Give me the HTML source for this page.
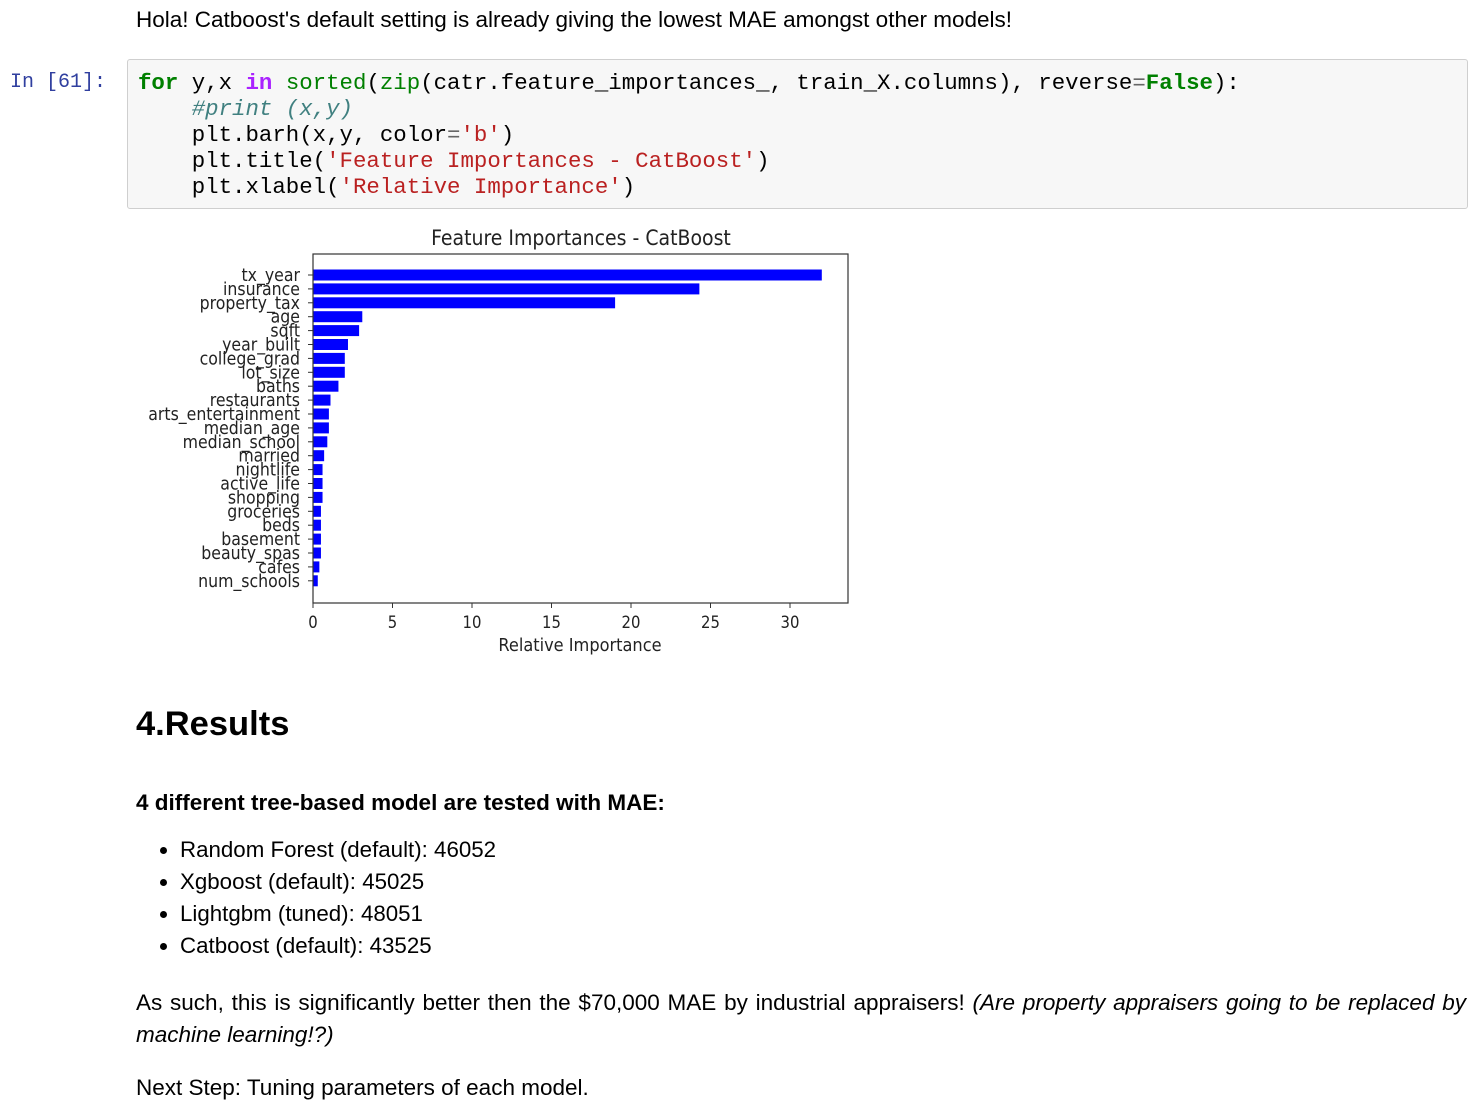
<!DOCTYPE html>
<html><head><meta charset="utf-8"><style>
body{margin:0;width:1480px;height:1120px;background:#fff;position:relative;font-family:"Liberation Sans",Arial,sans-serif;color:#000;overflow:hidden}
.a{position:absolute;white-space:nowrap}
.t{font-size:22.5px}
.code{position:absolute;left:127px;top:59px;width:1341px;height:150px;background:#f7f7f7;border:1px solid #cfcfcf;border-radius:3px;box-sizing:border-box}
pre{margin:0;position:absolute;left:10px;top:10px;font-family:"Liberation Mono",monospace;font-size:22.4px;line-height:26px;color:#000}
.k{color:#008000;font-weight:bold}.b{color:#008000}.p{color:#aa22ff;font-weight:bold}.s{color:#ba2121}.c{color:#408080;font-style:italic}.o{color:#666}
ul{position:absolute;left:136px;top:834px;margin:0;padding-left:44px;font-size:22.3px;line-height:32px}
</style></head><body>
<div class="a t" style="left:136px;top:7px">Hola! Catboost's default setting is already giving the lowest MAE amongst other models!</div>
<div class="a" style="left:10px;top:71px;font-family:'Liberation Mono',monospace;font-size:20px;color:#303f9f">In [61]:</div>
<div class="code"><pre><span class="k">for</span> y,x <span class="p">in</span> <span class="b">sorted</span>(<span class="b">zip</span>(catr.feature_importances_, train_X.columns), reverse<span class="o">=</span><span class="k">False</span>):
    <span class="c">#print (x,y)</span>
    plt.barh(x,y, color<span class="o">=</span><span class="s">'b'</span>)
    plt.title(<span class="s">'Feature Importances - CatBoost'</span>)
    plt.xlabel(<span class="s">'Relative Importance'</span>)</pre></div>
<svg class="a" style="left:0;top:0" width="900" height="670" font-family="DejaVu Sans Condensed, DejaVu Sans, sans-serif" font-size="17.5" fill="#222">
<text x="581" y="245" text-anchor="middle" font-size="21">Feature Importances - CatBoost</text>
<g fill="#0000ff" id="bars"></g>
<rect x="313" y="254" width="535" height="349" fill="none" stroke="#333" stroke-width="1.2"/>
<g id="lbl" text-anchor="end"></g>
<g id="xt" text-anchor="middle" font-size="16.5"></g>
<text x="580" y="651" text-anchor="middle" font-size="18">Relative Importance</text>
</svg>
<div class="a" style="left:136px;top:705px;font-size:34.5px;font-weight:bold">4.Results</div>
<div class="a t" style="left:136px;top:790px;font-weight:bold">4 different tree-based model are tested with MAE:</div>
<ul><li>Random Forest (default): 46052</li><li>Xgboost (default): 45025</li><li>Lightgbm (tuned): 48051</li><li>Catboost (default): 43525</li></ul>
<div class="a t" style="left:136px;top:987px;width:1330px;white-space:normal;line-height:32px;text-align:justify;text-align-last:left">As such, this is significantly better then the $70,000 MAE by industrial appraisers! <i>(Are property appraisers going to be replaced by machine learning!?)</i></div>
<div class="a t" style="left:136px;top:1075px">Next Step: Tuning parameters of each model.</div>
<script>
var n=["tx_year","insurance","property_tax","age","sqft","year_built","college_grad","lot_size","baths","restaurants","arts_entertainment","median_age","median_school","married","nightlife","active_life","shopping","groceries","beds","basement","beauty_spas","cafes","num_schools"];
var v=[32,24.3,19,3.1,2.9,2.2,2.0,2.0,1.6,1.1,1.0,1.0,0.9,0.7,0.6,0.6,0.6,0.5,0.5,0.5,0.5,0.4,0.3];
var NS="http://www.w3.org/2000/svg",b=document.getElementById("bars"),l=document.getElementById("lbl"),xt=document.getElementById("xt");
for(var i=0;i<n.length;i++){var cy=275+i*13.9;
var r=document.createElementNS(NS,"rect");r.setAttribute("x",313);r.setAttribute("y",cy-5.5);r.setAttribute("width",v[i]*15.9);r.setAttribute("height",11);b.appendChild(r);
var t=document.createElementNS(NS,"text");t.setAttribute("x",300);t.setAttribute("y",cy+6);t.textContent=n[i];l.appendChild(t);
var k=document.createElementNS(NS,"line");k.setAttribute("x1",308);k.setAttribute("x2",313);k.setAttribute("y1",cy);k.setAttribute("y2",cy);k.setAttribute("stroke","#333");l.appendChild(k);}
for(var j=0;j<=30;j+=5){var x=313+j*15.9;var t=document.createElementNS(NS,"text");t.setAttribute("x",x);t.setAttribute("y",628);t.textContent=j;xt.appendChild(t);
var k=document.createElementNS(NS,"line");k.setAttribute("x1",x);k.setAttribute("x2",x);k.setAttribute("y1",603);k.setAttribute("y2",608);k.setAttribute("stroke","#333");xt.appendChild(k);}
</script>
</body></html>
